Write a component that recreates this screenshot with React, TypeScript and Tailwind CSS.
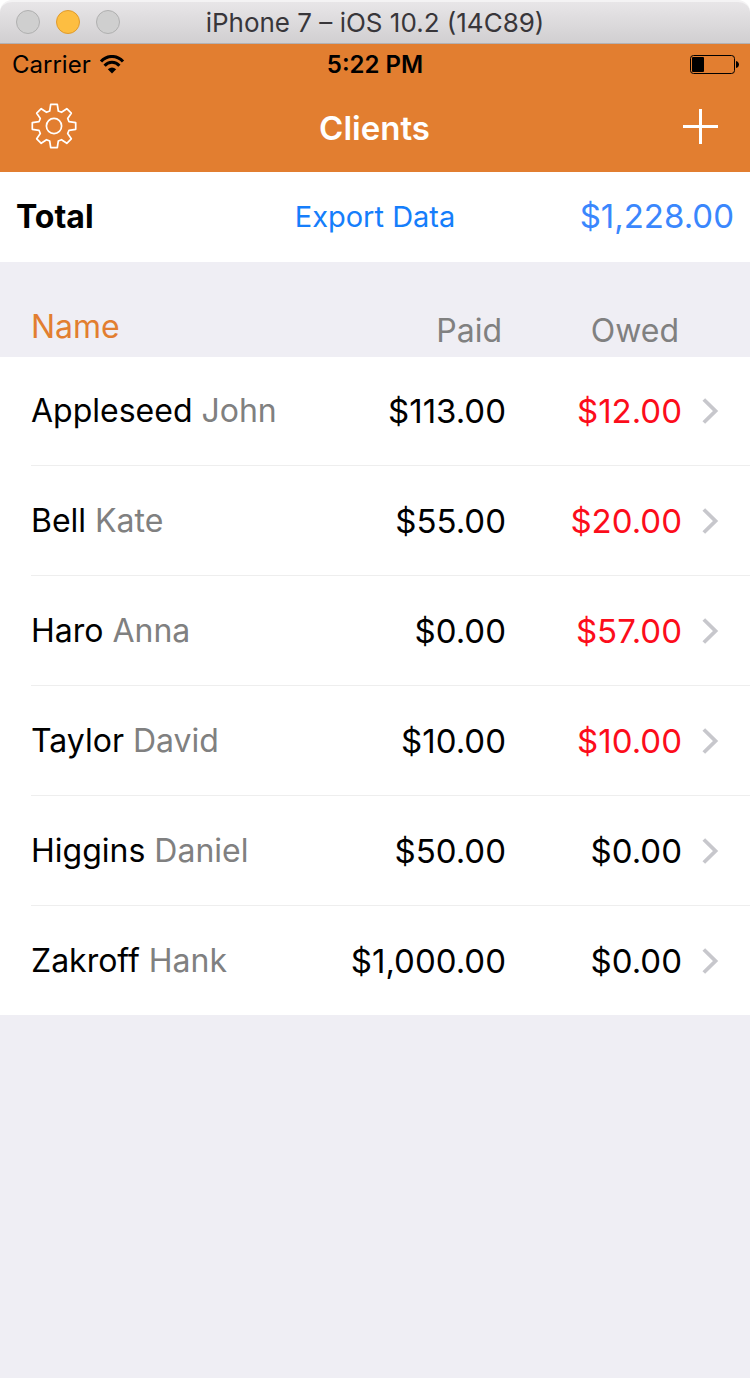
type Client = { last: string; first: string; paid: string; owed: string; due: boolean };

const clients: Client[] = [
  { last: "Appleseed", first: "John", paid: "$113.00", owed: "$12.00", due: true },
  { last: "Bell", first: "Kate", paid: "$55.00", owed: "$20.00", due: true },
  { last: "Haro", first: "Anna", paid: "$0.00", owed: "$57.00", due: true },
  { last: "Taylor", first: "David", paid: "$10.00", owed: "$10.00", due: true },
  { last: "Higgins", first: "Daniel", paid: "$50.00", owed: "$0.00", due: false },
  { last: "Zakroff", first: "Hank", paid: "$1,000.00", owed: "$0.00", due: false },
];

function WindowBar() {
  return (
    <div className="relative flex h-11 items-center justify-center rounded-t-xl border-t-2 border-b border-t-[#f4f3f4] border-b-[#b3b1b3] bg-linear-to-b from-[#e8e6e8] to-[#d1cfd1]">
      <div className="absolute top-2 left-4 flex gap-4">
        <button aria-label="Close" className="size-6 rounded-full border border-[#b0b0b0] bg-[#cfcfcf]" />
        <button aria-label="Minimize" className="size-6 rounded-full border border-[#e09b2d] bg-[#fdbe41]" />
        <button aria-label="Zoom" className="size-6 rounded-full border border-[#b0b0b0] bg-[#cfcfcf]" />
      </div>
      <span className="text-[26px] leading-8 text-[#38363a]">iPhone 7 – iOS 10.2 (14C89)</span>
    </div>
  );
}

function StatusBar() {
  return (
    <div className="grid h-[42px] grid-cols-3 items-center px-3 text-2xl">
      <div className="flex items-center gap-2">
        <span>Carrier</span>
        <svg width="26" height="20" viewBox="0 0 26 20" fill="none" stroke="#000" aria-hidden="true">
          <path d="M2 6.6C8-.3 18-.3 24 6.6" strokeWidth="3" />
          <path d="M5.6 10.7C9.6 6.1 16.4 6.1 20.4 10.7" strokeWidth="3" />
          <path d="M13 18.6L8.8 14.2Q13 10.6 17.2 14.2Z" fill="#000" stroke="none" />
        </svg>
      </div>
      <span className="text-center font-semibold">5:22 PM</span>
      <svg className="justify-self-end" width="48" height="20" viewBox="0 0 48 20" overflow="visible" aria-hidden="true">
        <rect x=".5" y=".5" width="44" height="18" rx="3" fill="none" stroke="#000" />
        <rect x="2" y="2" width="12" height="15" rx="1" />
        <path d="M46 6c4 1 4 6 0 7z" />
      </svg>
    </div>
  );
}

function NavBar() {
  return (
    <div className="grid h-[86px] grid-cols-3 items-center pr-8 pb-1.5 pl-[31px] text-white">
      <button aria-label="Settings" className="w-fit">
        <svg width="46" height="46" viewBox="0 0 46 46" fill="none" stroke="#fff" strokeWidth="1.7" strokeLinejoin="round" aria-hidden="true">
          <path d="M19.7 1.3H26.3L27.3 8 30.5 9.3 35.8 5.7 40.3 10.2 36.7 15.5 38 18.7 44.7 19.7V26.3L38 27.3 36.7 30.5 40.3 35.8 35.8 40.3 30.5 36.7 27.3 38 26.3 44.7H19.7L18.7 38 15.5 36.7 10.2 40.3 5.7 35.8 9.3 30.5 8 27.3 1.3 26.3V19.7L8 18.7 9.3 15.5 5.7 10.2 10.2 5.7 15.5 9.3 18.7 8Z" />
          <circle cx="23" cy="23" r="7.6" />
        </svg>
      </button>
      <h1 className="pt-1 text-center text-[33px] leading-10 font-semibold">Clients</h1>
      <button aria-label="Add client" className="justify-self-end">
        <svg width="35" height="35" viewBox="0 0 35 35" fill="#fff" aria-hidden="true">
          <path d="M16 0h3v16h16v3H19v16h-3V19H0v-3h16z" />
        </svg>
      </button>
    </div>
  );
}

function ClientRow({ client, first, last }: { client: Client; first: boolean; last: boolean }) {
  const line = last ? "" : "border-b border-[#eeeeee]";
  const height = first || last ? "h-[109px]" : "h-[110px]";
  const amount = "p-0 text-right text-[33px] leading-10 " + line;
  return (
    <tr>
      <td className="p-0 pl-[31px]">
        <a href={"#" + client.last} className={"flex items-center gap-[9px] " + height + " " + line}>
          <span>{client.last}</span>
          <span className="text-[#808080]">{client.first}</span>
        </a>
      </td>
      <td className={amount}>{client.paid}</td>
      <td className={client.due ? "text-[#fc0d1b] " + amount : amount}>{client.owed}</td>
      <td className={"p-0 pl-5 " + line}>
        <svg width="17" height="26" viewBox="0 0 17 26" fill="none" stroke="#c7c7cc" strokeWidth="3.8" aria-hidden="true">
          <path d="M1.8 1.5L13.5 13 1.8 24.5" />
        </svg>
      </td>
    </tr>
  );
}

export default function App() {
  return (
    <div className="min-h-screen bg-[#efeef4] font-['Inter','Liberation_Sans',sans-serif] text-black">
      <div className="bg-white">
        <WindowBar />
      </div>
      <header className="bg-[#e27e30]">
        <StatusBar />
        <NavBar />
      </header>
      <main>
        <section className="grid h-[90px] grid-cols-3 items-center bg-white px-4">
          <h2 className="text-[32px] font-bold">Total</h2>
          <button className="text-[29px] text-[#157efb]">Export Data</button>
          <span className="text-right text-[33px] text-[#3a87fd]">$1,228.00</span>
        </section>
        <table className="w-full table-fixed border-separate border-spacing-0 text-[32px] leading-10">
          <colgroup>
            <col />
            <col className="w-[190px]" />
            <col className="w-44" />
            <col className="w-[68px]" />
          </colgroup>
          <thead>
            <tr className="h-[95px] align-bottom text-[#808080]">
              <th className="p-0 pb-2.5 pl-[31px] text-left font-normal text-[#e27e30]">Name</th>
              <th className="p-0 pr-1 pb-1.5 text-right font-normal">Paid</th>
              <th className="p-0 pr-[3px] pb-1.5 text-right font-normal">Owed</th>
              <td className="p-0" />
            </tr>
          </thead>
          <tbody className="bg-white">
            {clients.map((client, i) => (
              <ClientRow key={client.last} client={client} first={i === 0} last={i === clients.length - 1} />
            ))}
          </tbody>
        </table>
      </main>
    </div>
  );
}
